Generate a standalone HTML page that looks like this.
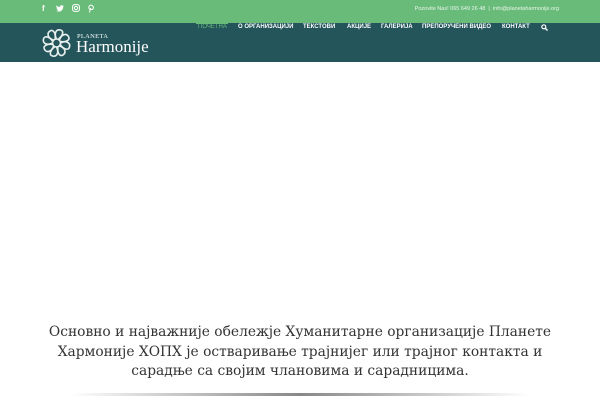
<!DOCTYPE html>
<html><head><meta charset="utf-8"><style>
*{margin:0;padding:0;box-sizing:border-box}
body{width:600px;height:400px;overflow:hidden;background:#fff;font-family:"Liberation Sans",sans-serif}
.top{position:absolute;left:0;top:0;width:600px;height:23px;background:#68bb79}
.hdr{position:absolute;left:0;top:23px;width:600px;height:39px;background:#23555a}
.soc{position:absolute;top:4px;color:#fff;font-size:8px}
.contact{position:absolute;right:41px;top:6px;font-size:5.5px;color:#eaf6ec}
.nav{position:absolute;top:24px;font-size:6px;font-weight:bold;color:#fff;white-space:nowrap}
.nav span{position:absolute;top:0}
.txt{position:absolute;left:0;top:323px;width:600px;text-align:center;font-family:"DejaVu Serif","Liberation Serif",serif;font-size:13.8px;line-height:19.5px;color:#333}
.line{position:absolute;left:70px;top:393px;width:460px;height:3px;background:linear-gradient(to right,rgba(0,0,0,0),#888 50%,rgba(0,0,0,0))}
</style></head><body>
<div class="top">
 <span class="soc" style="left:42px;font-weight:bold">f</span>
 <svg class="soc" style="left:56px;top:5px" width="8" height="7" viewBox="0 0 24 20"><path d="M24 2.5a10 10 0 0 1-2.8.8A5 5 0 0 0 23.3.6a10 10 0 0 1-3.1 1.2A4.9 4.9 0 0 0 11.8 6 14 14 0 0 1 1.7.9a4.9 4.9 0 0 0 1.5 6.6A5 5 0 0 1 1 6.9a4.9 4.9 0 0 0 3.9 4.8 5 5 0 0 1-2.2.1 4.9 4.9 0 0 0 4.6 3.4A9.9 9.9 0 0 1 0 17.2 14 14 0 0 0 7.5 19.4c9 0 14-7.5 14-14v-.6A10 10 0 0 0 24 2.5z" fill="#fff"/></svg>
 <svg class="soc" style="left:72px;top:4px" width="8" height="8" viewBox="0 0 8 8"><rect x=".6" y=".6" width="6.8" height="6.8" rx="2" fill="none" stroke="#fff" stroke-width="1"/><circle cx="4" cy="4" r="1.6" fill="none" stroke="#fff" stroke-width="1"/></svg>
 <svg class="soc" style="left:88px;top:4px" width="6" height="9" viewBox="0 0 6 9"><path d="M1.5 8.5L2.6 4M2 5.5A2.3 2.3 0 1 1 4.5 5.3C3.8 5.8 3 5.5 2.8 5" fill="none" stroke="#fff" stroke-width="1"/></svg>
 <div class="contact">Pozovite Nas! 065 649 26 48 &nbsp;|&nbsp; info@planetaharmonije.org</div>
</div>
<div class="hdr">
 <svg style="position:absolute;left:40px;top:4px" width="33" height="32" viewBox="0 0 32 32">
  <g fill="none" stroke="#e8f0ee" stroke-width="1.6">
   <circle cx="16" cy="16" r="4"/>
   <g id="p"><path d="M16 12C13 6 16 2 20 3C24 4 22 9 18 12"/></g>
   <use href="#p" transform="rotate(45 16 16)"/><use href="#p" transform="rotate(90 16 16)"/><use href="#p" transform="rotate(135 16 16)"/><use href="#p" transform="rotate(180 16 16)"/><use href="#p" transform="rotate(225 16 16)"/><use href="#p" transform="rotate(270 16 16)"/><use href="#p" transform="rotate(315 16 16)"/>
  </g></svg>
 <div style="position:absolute;left:77px;top:10px;font-family:'Liberation Serif',serif;font-size:6.5px;color:#fff;letter-spacing:.3px">PLANETA</div>
 <div style="position:absolute;left:76px;top:14px;font-family:'Liberation Serif',serif;font-size:17px;color:#fff">Harmonije</div>
</div>
<div style="position:absolute;left:196px;top:22px;width:32px;height:2px;background:#68bb79"></div>
<div class="nav">
 <span style="left:198px;color:#68bb79;font-weight:normal">ПОЧЕТНА</span>
 <span style="left:238px">О ОРГАНИЗАЦИЈИ</span>
 <span style="left:303px">ТЕКСТОВИ</span>
 <span style="left:347px">АКЦИЈЕ</span>
 <span style="left:381px">ГАЛЕРИЈА</span>
 <span style="left:422px">ПРЕПОРУЧЕНИ ВИДЕО</span>
 <span style="left:502px">КОНТАКТ</span>
</div>
<svg style="position:absolute;left:541px;top:24px" width="7" height="7" viewBox="0 0 7 7"><circle cx="2.8" cy="2.8" r="2" fill="none" stroke="#fff" stroke-width="1.2"/><path d="M4.3 4.3L6.5 6.5" stroke="#fff" stroke-width="1.4"/></svg>
<div class="txt">Основно и најважније обележје Хуманитарне организације Планете<br>Хармоније ХОПХ је остваривање трајнијег или трајног контакта и<br>сарадње са својим члановима и сарадницима.</div>
<div class="line"></div>
</body></html>
